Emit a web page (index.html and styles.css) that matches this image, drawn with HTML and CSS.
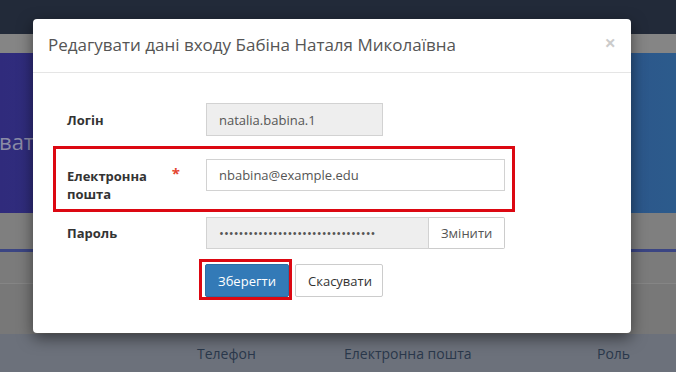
FILE: index.html
```html
<!DOCTYPE html>
<html lang="uk">
<head>
  <meta charset="UTF-8">
  <meta name="viewport" content="width=device-width, initial-scale=1.0">
  <title>Редагувати дані входу</title>
  <link rel="stylesheet" href="styles.css">
</head>
<body>

  <div class="page">
    <div class="topbar"></div>
    <div class="strip"></div>
    <div class="banner"><span class="banner__title">вати</span></div>
    <div class="subbar"></div>
    <div class="line"></div>
    <div class="tabs"></div>
    <div class="gap"></div>
    <div class="thead">
      <span class="th th--phone">Телефон</span>
      <span class="th th--mail">Електронна пошта</span>
      <span class="th th--role">Роль</span>
    </div>
  </div>

  <div class="modal">
    <div class="modal__header">
      <h4 class="modal__title">Редагувати дані входу Бабіна Наталя Миколаївна</h4>
      <span class="modal__close">&times;</span>
    </div>
    <div class="modal__body">
      <div class="row">
        <label class="row__label">Логін</label>
        <div class="row__field">
          <input class="input input--short" type="text" value="natalia.babina.1" readonly>
        </div>
      </div>
      <div class="row row--marked">
        <label class="row__label">Електронна пошта<span class="req">*</span></label>
        <div class="row__field">
          <input class="input input--white" type="text" value="nbabina@example.edu">
        </div>
      </div>
      <div class="row">
        <label class="row__label">Пароль</label>
        <div class="row__field group">
          <input class="input input--pass" type="password" value="12345678901234567890123456789012" readonly>
          <button class="btn btn--addon">Змінити</button>
        </div>
      </div>
      <div class="actions">
        <span class="mark">
          <button class="btn btn--primary">Зберегти</button>
        </span>
        <button class="btn btn--default">Скасувати</button>
      </div>
    </div>
  </div>

</body>
</html>
```

FILE: styles.css
```css
* { padding:0; margin:0; box-sizing:border-box; font-family:"Open Sans", "Noto Sans", sans-serif; }

:root {
  --color-text: #333333;
  --color-muted: #555555;
  --color-border: #cccccc;
  --color-readonly: #eeeeee;
  --color-primary: #337ab7;
  --color-mark: #dc0812;

  --modal-left: 33px;
  --modal-top: 19px;
  --modal-width: 598px;
}

body {
  width: 676px;
  height: 372px;
  overflow: hidden;
  background-color: #6c717a;
}

/* background page (already dimmed by the modal backdrop) */
.page {
  display: flex;
  flex-direction: column;
  height: 100%;
}

.topbar { height: 34px; background-color: #222a39; }
.strip { height: 19px; background-color: #858585; }

.banner {
  height: 160px;
  background: linear-gradient(90deg, #302b7c 0%, #2d3c84 45%, #2c5b8c 100%);
  display: flex;
  align-items: center;
  padding-top: 16px;
}

.banner__title {
  margin-left: -1px;
  font-size: 22px;
  color: #8b8ba6;
}

.subbar { height: 36px; background-color: #7f7f7f; }
.line { height: 3px; background-color: #3b4583; }
.tabs { height: 32px; background-color: #7b7b7b; border-bottom: 1px solid #858585; }
.gap { height: 50px; background-color: #787878; }

.thead {
  flex: 1;
  position: relative;
  background-color: #6c717b;
  font-size: 14px;
  color: #2a384b;
}

.th {
  position: absolute;
  top: 10px;
}
.th--phone { left: 197px; }
.th--mail { left: 344px; }
.th--role { left: 597px; }

/* modal */
.modal {
  position: absolute;
  left: var(--modal-left);
  top: var(--modal-top);
  width: var(--modal-width);
  height: 314px;
  background-color: #ffffff;
  border-radius: 4px;
  box-shadow: 0 5px 15px rgba(0, 0, 0, 0.5);
}

.modal__header {
  display: flex;
  align-items: flex-start;
  justify-content: space-between;
  padding: 14px 15px 15px;
  border-bottom: 1px solid #e5e5e5;
}

.modal__title {
  font-size: 17px;
  font-weight: 400;
  line-height: 24px;
  color: var(--color-muted);
}

.modal__close {
  font-size: 20px;
  font-weight: 700;
  line-height: 18px;
  margin-top: 1px;
  color: #000000;
  opacity: 0.2;
}

.modal__body {
  padding: 27px 116px 0 20px;
}

.row {
  display: flex;
  align-items: center;
  border: 3px solid transparent;
  padding: 0 7px 0 11px;
  margin-bottom: 7px;
}

.row--marked {
  align-items: flex-start;
  border-color: var(--color-mark);
  padding-top: 10px;
  padding-bottom: 6px;
  margin-bottom: 2px;
}

.row__label {
  width: 139px;
  flex-shrink: 0;
  display: flex;
  align-items: flex-start;
  justify-content: space-between;
  padding-right: 24px;
  font-size: 13px;
  font-weight: 700;
  line-height: 18px;
  color: var(--color-text);
}

.row--marked .row__label {
  margin-top: 8px;
  padding-right: 26px;
}

.req {
  color: #e4452f;
  font-size: 15px;
  margin-top: -3px;
}

.row__field {
  flex: 1;
}

.input {
  display: block;
  width: 100%;
  height: 33px;
  padding: 6px 12px;
  font-size: 13px;
  color: var(--color-muted);
  background-color: var(--color-readonly);
  border: 1px solid #d2d2d2;
  outline: none;
}

.input--short { width: 177px; }
.input--white { background-color: #ffffff; height: 32px; }

.input--pass {
  flex: 1;
  height: 32px;
  font-size: 13px;
}

.group {
  display: flex;
}

.btn {
  height: 33px;
  padding: 0 12px;
  font-size: 13px;
  border: 1px solid var(--color-border);
  border-radius: 2px;
  background-color: #ffffff;
  color: var(--color-text);
  cursor: pointer;
}

.btn--addon {
  width: 76px;
  height: 32px;
  border-left: none;
  border-radius: 0 2px 2px 0;
  color: var(--color-muted);
}

.mark {
  display: flex;
  border: 3px solid var(--color-mark);
  padding: 2px 0 0 3px;
}

.btn--primary {
  width: 84px;
  background-color: var(--color-primary);
  border-color: #2e6da4;
  color: #ffffff;
}

.btn--default {
  width: 88px;
  margin-top: 5px;
  margin-left: 3px;
}

.actions {
  display: flex;
  align-items: flex-start;
  padding-left: 146px;
  margin-top: 4px;
}
```
